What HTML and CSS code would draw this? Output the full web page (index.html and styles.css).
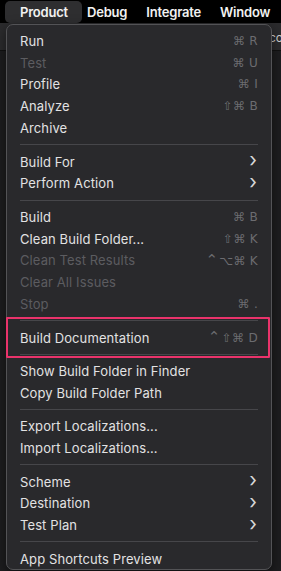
FILE: index.html
```html
<!DOCTYPE html>
<html lang="en">
<head>
    <meta charset="UTF-8">
    <title>Product Menu</title>
    <link rel="stylesheet" href="styles.css">
</head>
<body>
    <div class="menu-bar">
        <span class="bar-item active">Product</span>
        <span class="bar-item">Debug</span>
        <span class="bar-item">Integrate</span>
        <span class="bar-item">Window</span>
    </div>
    <div class="backdrop">
        <div class="toolbar-strip"><span class="peek">co</span></div>
        <div class="menu">
            <div class="item"><span>Run</span><span class="keys">⌘ R</span></div>
            <div class="item disabled"><span>Test</span><span class="keys">⌘ U</span></div>
            <div class="item"><span>Profile</span><span class="keys">⌘ I</span></div>
            <div class="item"><span>Analyze</span><span class="keys">⇧⌘ B</span></div>
            <div class="item"><span>Archive</span></div>
            <div class="sep"></div>
            <div class="item"><span>Build For</span><span class="chev">›</span></div>
            <div class="item"><span>Perform Action</span><span class="chev">›</span></div>
            <div class="sep"></div>
            <div class="item"><span>Build</span><span class="keys">⌘ B</span></div>
            <div class="item"><span>Clean Build Folder...</span><span class="keys">⇧⌘ K</span></div>
            <div class="item disabled"><span>Clean Test Results</span><span class="keys"><span class="ctrl">⌃</span>⌥⌘ K</span></div>
            <div class="item disabled"><span>Clear All Issues</span></div>
            <div class="item disabled"><span>Stop</span><span class="keys">⌘ .</span></div>
            <div class="sep"></div>
            <div class="item"><span>Build Documentation</span><span class="keys"><span class="ctrl">⌃</span>⇧⌘ D</span></div>
            <div class="sep"></div>
            <div class="item"><span>Show Build Folder in Finder</span></div>
            <div class="item"><span>Copy Build Folder Path</span></div>
            <div class="sep"></div>
            <div class="item"><span>Export Localizations...</span></div>
            <div class="item"><span>Import Localizations...</span></div>
            <div class="sep"></div>
            <div class="item"><span>Scheme</span><span class="chev">›</span></div>
            <div class="item"><span>Destination</span><span class="chev">›</span></div>
            <div class="item"><span>Test Plan</span><span class="chev">›</span></div>
            <div class="sep"></div>
            <div class="item"><span>App Shortcuts Preview</span></div>
            <div class="highlight-box"></div>
        </div>
    </div>
</body>
</html>
```

FILE: styles.css
```css
* {
    box-sizing: border-box;
    margin: 0;
    padding: 0;
}
body {
    width: 281px;
    height: 571px;
    overflow: hidden;
    background-color: #1f1f21;
    font-family: 'Inter', 'Liberation Sans', sans-serif;
    font-size: 13px;
    color: #e2e2e3;
}
.menu-bar {
    height: 23px;
    background-color: #000;
    display: flex;
    align-items: center;
    padding-left: 5px;
    white-space: nowrap;
}
.bar-item {
    font-weight: 600;
    color: #f2f2f2;
    line-height: 22px;
    letter-spacing: -0.2px;
    margin-right: 19px;
}
.bar-item.active {
    background-color: #2e2e30;
    border-radius: 5px;
    padding: 0 14px 0 15px;
    margin-right: 5px;
}
.backdrop {
    position: relative;
    height: 548px;
    background-color: #1d1d1f;
}
.toolbar-strip {
    height: 28px;
    background-color: #2b2b2d;
    border-bottom: 1px solid #111;
    display: flex;
    justify-content: flex-end;
    align-items: flex-end;
}
.peek {
    color: #d0d0d0;
    font-size: 12px;
    padding-bottom: 5px;
    margin-right: -2px;
}
.menu {
    position: absolute;
    top: 1px;
    left: 6px;
    width: 266px;
    height: 546px;
    background-color: #29292c;
    border: 1px solid #535356;
    border-radius: 7px;
    padding: 5px 13px 0 13px;
    box-shadow: 0 4px 12px rgba(0,0,0,0.5);
}
.item {
    height: 21.8px;
    display: flex;
    align-items: center;
    justify-content: space-between;
    letter-spacing: 0.1px;
}
.item.disabled {
    color: #5c5c60;
}
.keys {
    color: #6c6c70;
    font-family: 'DejaVu Sans', sans-serif;
    font-size: 12px;
    letter-spacing: 0.3px;
}
.ctrl {
    font-size: 15px;
    line-height: 1;
    margin-right: 1px;
}
.chev {
    color: #d8d8d8;
    font-size: 20px;
    line-height: 1;
    margin-top: -3px;
    margin-right: 1px;
}
.sep {
    height: 11.7px;
    display: flex;
    align-items: center;
}
.sep::after {
    content: "";
    display: block;
    width: 100%;
    height: 1px;
    background-color: #46464a;
}
.highlight-box {
    position: absolute;
    left: -1px;
    top: 292px;
    width: 264px;
    height: 41px;
    border: 2px solid #e9336b;
    border-radius: 1px;
}
```
